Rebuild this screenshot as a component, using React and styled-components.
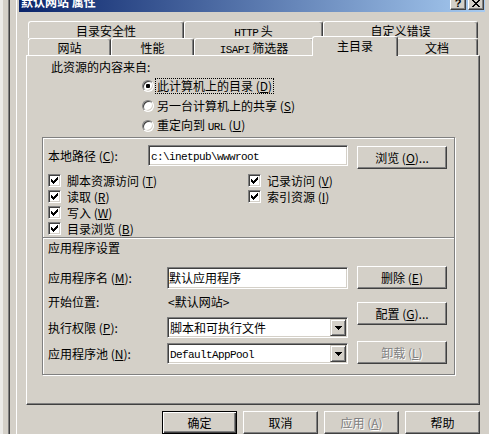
import React from 'react';
import styled, { createGlobalStyle, css } from 'styled-components';

const GlobalStyle = createGlobalStyle`
  html, body { margin: 0; padding: 0; }
  body {
    width: 489px;
    height: 434px;
    overflow: hidden;
    background: #d4d0c8;
    font-family: "Noto Sans CJK SC", "Liberation Sans", sans-serif;
    font-size: 12px;
    color: #000;
  }
`;

const Screen = styled.div`
  display: flex;
  width: 489px;
  height: 434px;
  overflow: hidden;
  background: #d4d0c8;
`;

// frame of the window lying behind the dialog
const BehindFrame = styled.div`
  flex: 0 0 19px;
  background: linear-gradient(to right,
    #ecebe8 0 3px, #d4d0c8 3px 8px, #808080 8px 9px, #404040 9px 10px,
    #d4d0c8 10px 16px, #ffffff 16px 17px, #d4d0c8 17px);
`;

const RightEdge = styled.div`
  flex: 1;
  background: #d4d0c8;
`;

const Dialog = styled.div`
  flex: 0 0 466px;
  display: flex;
  flex-direction: column;
`;

const TitleBar = styled.div`
  flex: 0 0 12px;
  display: flex;
  align-items: flex-start;
  padding: 0 1px 0 2px;
  overflow: hidden;
  background: linear-gradient(to right, #0a246a, #a6caf0);
`;

const TitleText = styled.div`
  flex: 1;
  margin-top: -4px;
  line-height: 12px;
  font-weight: bold;
  color: #fff;
  white-space: nowrap;
`;

const CaptionButton = styled.div`
  width: 16px;
  height: 14px;
  margin-top: -4px;
  box-sizing: border-box;
  display: flex;
  align-items: center;
  justify-content: center;
  background: #d4d0c8;
  border: 1px solid;
  border-color: #fff #404040 #404040 #fff;
  box-shadow: inset -1px -1px #808080;
  font: bold 11px "Liberation Sans", sans-serif;
  & + & { margin-left: 2px; }
`;

const TabStrip = styled.div`
  margin: 9px 7px 0 9px;
`;

const TabRow = styled.div`
  display: flex;
  height: 17px;
  align-items: flex-start;
`;

const Tab = styled.div`
  flex: 0 0 ${p => p.$w}px;
  height: 17px;
  box-sizing: border-box;
  padding-top: 1px;
  border-top: 1px solid #fff;
  border-left: 1px solid #fff;
  border-right: 1px solid #404040;
  border-radius: 3px 3px 0 0;
  box-shadow: inset -1px 0 #808080;
  line-height: 15px;
  text-align: center;
  white-space: nowrap;
  ${p => p.$active && css`
    flex-basis: ${p.$w + 4}px;
    height: 20px;
    margin: -2px -2px 0;
    padding-top: 1px;
    position: relative;
    z-index: 1;
    background: #d4d0c8;
  `}
`;

const Mono = styled.span`
  font-family: "Liberation Mono", monospace;
  font-size: 11px;
  letter-spacing: -0.6px;
`;

const Panel = styled.div`
  height: 353px;
  margin: 0 5px 0 7px;
  box-sizing: border-box;
  display: flex;
  flex-direction: column;
  align-items: flex-start;
  border: 1px solid;
  border-color: #fff #404040 #404040 #fff;
  box-shadow: inset -1px -1px #808080;
`;

const Heading = styled.div`
  margin: ${p => p.$m};
  line-height: 16px;
  white-space: nowrap;
`;

const RadioList = styled.div`
  margin: 1px 0 0 115px;
`;

const RadioRow = styled.div`
  height: 20px;
  display: flex;
  align-items: center;
`;

const RadioDot = styled.span`
  width: 12px;
  height: 12px;
  box-sizing: border-box;
  border-radius: 50%;
  display: flex;
  align-items: center;
  justify-content: center;
  background: #fff;
  border: 1px solid;
  border-color: #808080 #fff #fff #808080;
  box-shadow: inset 1px 1px #404040, inset -1px -1px #d4d0c8;
  &::after {
    content: "";
    display: ${p => (p.$on ? 'block' : 'none')};
    width: 4px;
    height: 4px;
    border-radius: 1px;
    background: #000;
  }
`;

const OptionText = styled.span`
  margin-left: 2px;
  padding: 0 1px;
  line-height: 14px;
  white-space: nowrap;
  outline: ${p => (p.$focus ? '1px dotted #000' : 'none')};
`;

const Group = styled.div`
  margin: 1px 0 0 15px;
  width: 413px;
  height: 238px;
  box-sizing: border-box;
  border: 1px solid #808080;
  box-shadow: inset 1px 1px #fff, 1px 1px #fff;
`;

const Section = styled.div`
  padding: 0 5px;
`;

const Divider = styled.div`
  margin-top: 1px;
  border-top: 1px solid #808080;
  border-bottom: 1px solid #fff;
`;

const FormRow = styled.div`
  display: flex;
  align-items: ${p => p.$align || 'center'};
  margin-top: ${p => p.$mt}px;
  height: ${p => p.$h}px;
`;

const FieldLabel = styled.span`
  flex: 0 0 ${p => p.$w}px;
  line-height: 16px;
  white-space: nowrap;
`;

const Field = styled.div`
  width: ${p => p.$w}px;
  height: ${p => p.$h}px;
  box-sizing: border-box;
  display: flex;
  align-items: center;
  padding-left: ${p => p.$pad}px;
  background: #fff;
  border: 1px solid;
  border-color: #808080 #fff #fff #808080;
  box-shadow: inset 1px 1px #404040, inset -1px -1px #d4d0c8;
  white-space: nowrap;
  overflow: hidden;
`;

const FieldValue = styled.span`
  flex: 1;
  line-height: 16px;
`;

const DropButton = styled.span`
  flex: 0 0 16px;
  height: 17px;
  margin-right: 1px;
  box-sizing: border-box;
  display: flex;
  align-items: center;
  justify-content: center;
  background: #d4d0c8;
  border: 1px solid;
  border-color: #d4d0c8 #404040 #404040 #d4d0c8;
  box-shadow: inset 1px 1px #fff, inset -1px -1px #808080;
`;

const PlainValue = styled.span`
  padding-left: 1px;
  line-height: 16px;
  white-space: nowrap;
`;

const Button = styled.div`
  flex: 0 0 auto;
  width: ${p => p.$w}px;
  height: 23px;
  margin: ${p => p.$m || '0'};
  box-sizing: border-box;
  display: flex;
  align-items: center;
  justify-content: center;
  background: #d4d0c8;
  white-space: nowrap;
  ${p => (p.$default
    ? css`
      border: 1px solid #000;
      box-shadow: inset 1px 1px #fff, inset -1px -1px #404040, inset -2px -2px #808080;
    `
    : css`
      border: 1px solid;
      border-color: #fff #404040 #404040 #fff;
      box-shadow: inset -1px -1px #808080;
    `)}
  ${p => p.$disabled && css`
    color: #808080;
    text-shadow: 1px 1px #fff;
  `}
`;

const Checks = styled.div`
  display: flex;
  margin-top: 3px;
`;

const CheckColumn = styled.div`
  flex: 0 0 ${p => p.$w || 'auto'};
`;

const CheckRow = styled.div`
  height: 16px;
  display: flex;
  align-items: center;
`;

const CheckBox = styled.span`
  flex: 0 0 13px;
  height: 13px;
  box-sizing: border-box;
  display: flex;
  align-items: center;
  justify-content: center;
  margin-right: 6px;
  background: #fff;
  border: 1px solid;
  border-color: #808080 #fff #fff #808080;
  box-shadow: inset 1px 1px #404040, inset -1px -1px #d4d0c8;
`;

const AppArea = styled.div`
  display: flex;
`;

const AppFields = styled.div`
  flex: 0 0 300px;
`;

const AppButtons = styled.div`
  margin-left: 9px;
  display: flex;
  flex-direction: column;
`;

const ButtonBar = styled.div`
  display: flex;
  justify-content: flex-end;
  gap: 6px;
  margin-top: 6px;
  padding-right: 5px;
`;

const CheckMark = () => (
  <svg width="7" height="7" viewBox="0 0 7 7" shapeRendering="crispEdges">
    <path fill="#000" d="M6 0h1v1h-1zM5 1h2v1h-2zM0 2h1v1h-1zM4 2h3v1h-3zM0 3h2v1h-2zM3 3h3v1h-3zM0 4h5v1h-5zM1 5h3v1h-3zM2 6h1v1h-1z" />
  </svg>
);

const DownArrow = () => (
  <svg width="7" height="4" viewBox="0 0 7 4" shapeRendering="crispEdges">
    <path fill="#000" d="M0 0h7v1h-7zM1 1h5v1h-5zM2 2h3v1h-3zM3 3h1v1h-1z" />
  </svg>
);

const CloseGlyph = () => (
  <svg width="8" height="7" viewBox="0 0 8 7" shapeRendering="crispEdges">
    <path fill="#000" d="M0 0h2v1h-2zM6 0h2v1h-2zM1 1h2v1h-2zM5 1h2v1h-2zM2 2h4v1h-4zM3 3h2v1h-2zM2 4h4v1h-4zM1 5h2v1h-2zM5 5h2v1h-2zM0 6h2v1h-2zM6 6h2v1h-2z" />
  </svg>
);

const Key = ({ k }) => (
  <> (<u>{k}</u>)</>
);

const backTabs = [
  { w: 156, label: '目录安全性' },
  { w: 139, label: <><Mono>HTTP</Mono> 头</> },
  { w: 155, label: '自定义错误' },
];

const frontTabs = [
  { w: 83, label: '网站' },
  { w: 83, label: '性能' },
  { w: 120, label: <><Mono>ISAPI</Mono> 筛选器</> },
  { w: 82, label: '主目录', active: true },
  { w: 82, label: '文档' },
];

const sources = [
  { label: '此计算机上的目录', k: 'D', on: true },
  { label: '另一台计算机上的共享', k: 'S' },
  { label: <>重定向到 <Mono>URL</Mono></>, k: 'U' },
];

const leftChecks = [
  ['脚本资源访问', 'T'],
  ['读取', 'R'],
  ['写入', 'W'],
  ['目录浏览', 'B'],
];

const rightChecks = [
  ['记录访问', 'V'],
  ['索引资源', 'I'],
];

function Select({ children }) {
  return (
    <Field $w={181} $h={21} $pad={2}>
      <FieldValue>{children}</FieldValue>
      <DropButton><DownArrow /></DropButton>
    </Field>
  );
}

export default function App() {
  return (
    <>
      <GlobalStyle />
      <Screen>
        <BehindFrame />
        <Dialog>
          <TitleBar>
            <TitleText>默认网站 属性</TitleText>
            <CaptionButton>?</CaptionButton>
            <CaptionButton><CloseGlyph /></CaptionButton>
          </TitleBar>

          <TabStrip>
            <TabRow>
              {backTabs.map((t, i) => <Tab key={i} $w={t.w}>{t.label}</Tab>)}
            </TabRow>
            <TabRow>
              {frontTabs.map((t, i) => <Tab key={i} $w={t.w} $active={t.active}>{t.label}</Tab>)}
            </TabRow>
          </TabStrip>

          <Panel>
            <Heading $m="3px 0 0 24px">此资源的内容来自:</Heading>
            <RadioList>
              {sources.map((s, i) => (
                <RadioRow key={i}>
                  <RadioDot $on={s.on} />
                  <OptionText $focus={s.on}>{s.label}<Key k={s.k} /></OptionText>
                </RadioRow>
              ))}
            </RadioList>

            <Group>
              <Section>
                <FormRow $mt={7} $h={24} $align="flex-start">
                  <FieldLabel $w={100} style={{ lineHeight: '21px' }}>本地路径<Key k="C" />:</FieldLabel>
                  <Field $w={200} $h={21} $pad={2}>
                    <FieldValue><Mono>c:\inetpub\wwwroot</Mono></FieldValue>
                  </Field>
                  <Button $w={90} $m="1px 0 0 9px">浏览<Key k="O" />...</Button>
                </FormRow>
                <Checks>
                  <CheckColumn $w="200px">
                    {leftChecks.map(([t, k]) => (
                      <CheckRow key={k}><CheckBox><CheckMark /></CheckBox>{t}<Key k={k} /></CheckRow>
                    ))}
                  </CheckColumn>
                  <CheckColumn>
                    {rightChecks.map(([t, k]) => (
                      <CheckRow key={k}><CheckBox><CheckMark /></CheckBox>{t}<Key k={k} /></CheckRow>
                    ))}
                  </CheckColumn>
                </Checks>
              </Section>
              <Divider />
              <Section>
                <Heading $m="1px 0 0 0">应用程序设置</Heading>
                <AppArea>
                  <AppFields>
                    <FormRow $mt={11} $h={22}>
                      <FieldLabel $w={119}>应用程序名<Key k="M" />:</FieldLabel>
                      <Field $w={181} $h={22} $pad={1}>
                        <FieldValue>默认应用程序</FieldValue>
                      </Field>
                    </FormRow>
                    <FormRow $mt={5} $h={16}>
                      <FieldLabel $w={119}>开始位置:</FieldLabel>
                      <PlainValue>&lt;默认网站&gt;</PlainValue>
                    </FormRow>
                    <FormRow $mt={7} $h={21}>
                      <FieldLabel $w={119}>执行权限<Key k="P" />:</FieldLabel>
                      <Select>脚本和可执行文件</Select>
                    </FormRow>
                    <FormRow $mt={5} $h={21}>
                      <FieldLabel $w={119}>应用程序池<Key k="N" />:</FieldLabel>
                      <Select><Mono>DefaultAppPool</Mono></Select>
                    </FormRow>
                  </AppFields>
                  <AppButtons>
                    <Button $w={90} $m="10px 0 0 0">删除<Key k="E" /></Button>
                    <Button $w={90} $m="13px 0 0 0">配置<Key k="G" />...</Button>
                    <Button $w={90} $m="16px 0 0 0" $disabled>卸载<Key k="L" /></Button>
                  </AppButtons>
                </AppArea>
              </Section>
            </Group>
          </Panel>

          <ButtonBar>
            <Button $w={75} $default>确定</Button>
            <Button $w={75}>取消</Button>
            <Button $w={75} $disabled>应用<Key k="A" /></Button>
            <Button $w={75}>帮助</Button>
          </ButtonBar>
        </Dialog>
        <RightEdge />
      </Screen>
    </>
  );
}
